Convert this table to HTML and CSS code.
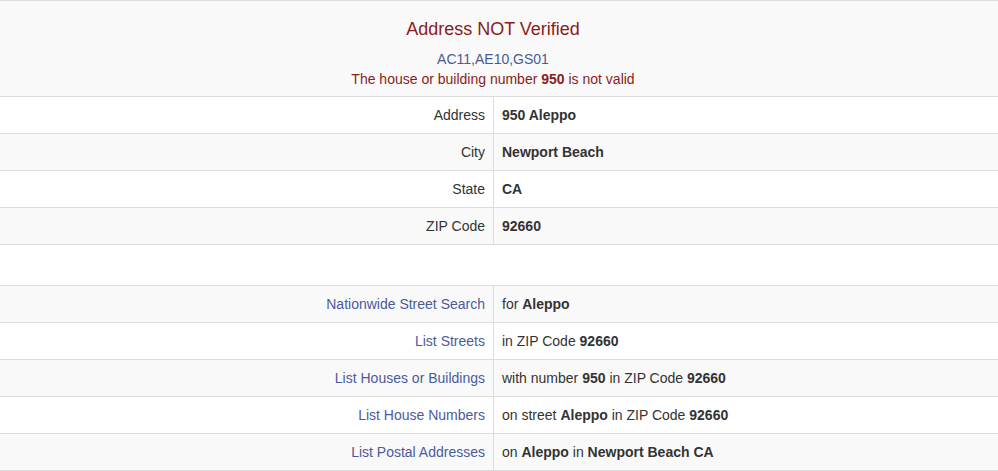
FILE: index.html
```html
<!DOCTYPE html>
<html>
<head>
<meta charset="utf-8">
<link rel="stylesheet" href="styles.css">
</head>
<body>
<table class="tbl">
  <colgroup><col class="c1"><col class="c2"></colgroup>
  <tr class="odd">
    <td colspan="2" class="head">
      <div class="head-inner">
        <h4 class="title">Address NOT Verified</h4>
        <div class="codes">AC11,AE10,GS01</div>
        <div class="msg">The house or building number <b>950</b> is not valid</div>
      </div>
    </td>
  </tr>
  <tr><td class="lbl">Address</td><td class="val"><b>950 Aleppo</b></td></tr>
  <tr class="odd"><td class="lbl">City</td><td class="val"><b>Newport Beach</b></td></tr>
  <tr><td class="lbl">State</td><td class="val"><b>CA</b></td></tr>
  <tr class="odd"><td class="lbl">ZIP Code</td><td class="val"><b>92660</b></td></tr>
</table>

<table class="tbl second">
  <colgroup><col class="c1"><col class="c2"></colgroup>
  <tr class="odd"><td class="lbl"><a href="#">Nationwide Street Search</a></td><td class="val">for <b>Aleppo</b></td></tr>
  <tr><td class="lbl"><a href="#">List Streets</a></td><td class="val">in ZIP Code <b>92660</b></td></tr>
  <tr class="odd"><td class="lbl"><a href="#">List Houses or Buildings</a></td><td class="val">with number <b>950</b> in ZIP Code <b>92660</b></td></tr>
  <tr><td class="lbl"><a href="#">List House Numbers</a></td><td class="val">on street <b>Aleppo</b> in ZIP Code <b>92660</b></td></tr>
  <tr class="odd"><td class="lbl"><a href="#">List Postal Addresses</a></td><td class="val">on <b>Aleppo</b> in <b>Newport Beach CA</b></td></tr>
</table>
</body>
</html>
```

FILE: styles.css
```css
html, body {
  margin: 0;
  padding: 0;
  background: #fff;
}
body {
  font-family: "Liberation Sans", Arial, sans-serif;
  font-size: 14px;
  line-height: 20px;
  color: #333;
}
.tbl {
  width: 998px;
  table-layout: fixed;
  border-collapse: separate;
  border-spacing: 0;
  border-bottom: 1px solid #ddd;
}
.c1 {
  width: 493px;
}
.c2 {
  width: 505px;
}
.second {
  margin-top: 40px;
}
.tbl td {
  box-sizing: border-box;
  padding: 8px;
  border-top: 1px solid #ddd;
  vertical-align: top;
}
.tbl tr.odd td {
  background: #f9f9f9;
}
.tbl td.lbl {
  text-align: right;
}
.tbl td.val {
  border-left: 1px solid #ddd;
}
.tbl td.head {
  padding-bottom: 7px;
}
.head-inner {
  width: 970px;
  text-align: center;
}
.title {
  margin: 10px 0;
  font-size: 18px;
  line-height: 20px;
  font-weight: normal;
  color: #8a1d1a;
}
.codes {
  color: #4a5b94;
}
.msg {
  color: #8a1d1a;
}
a {
  color: #4a5b9c;
  text-decoration: none;
}
b {
  font-weight: bold;
}
```
